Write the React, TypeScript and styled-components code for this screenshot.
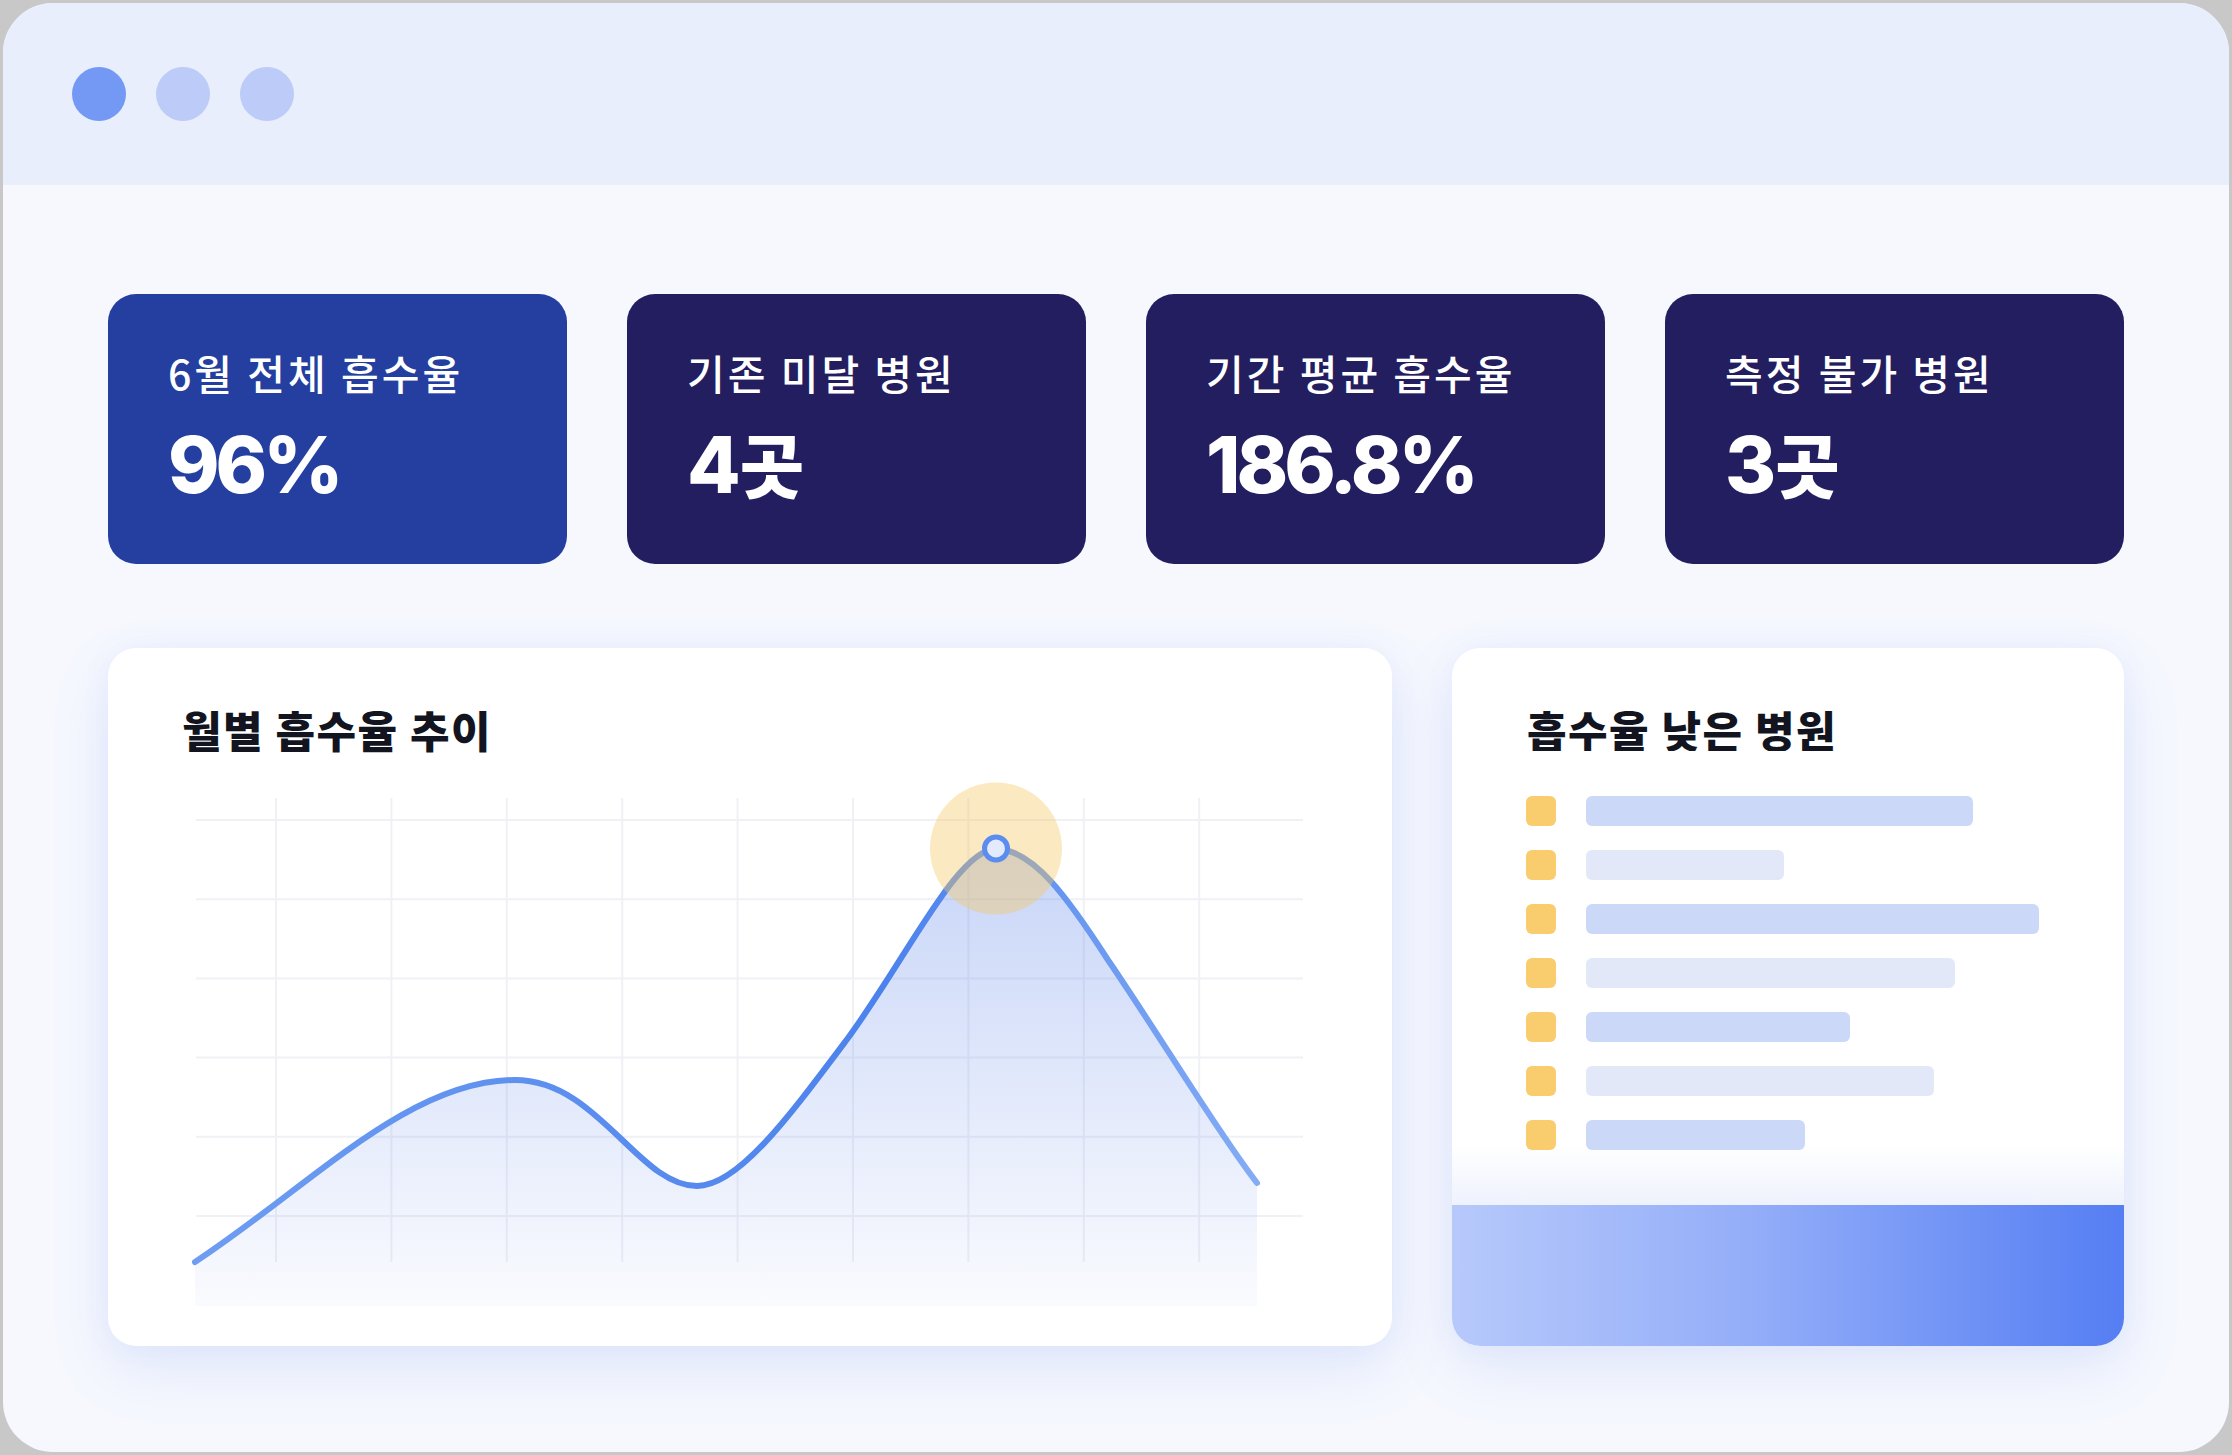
import React from "react";
import styled, { createGlobalStyle } from "styled-components";

const Global = createGlobalStyle`
  html, body { margin: 0; padding: 0; }
  body {
    background: #c8c8c8;
    width: 2232px;
    height: 1455px;
    overflow: hidden;
    font-family: "Noto Sans CJK KR", "Noto Sans", sans-serif;
  }
`;

const Window = styled.div`
  margin: 3px;
  width: 2226px;
  height: 1449px;
  border-radius: 50px;
  overflow: hidden;
  display: flex;
  flex-direction: column;
  background: #f6f8fe;
`;

const TitleBar = styled.div`
  height: 182px;
  flex: none;
  background: #e8eefb;
  display: flex;
  align-items: center;
  gap: 30px;
  padding-left: 69px;
`;

const Dot = styled.span<{ $active?: boolean }>`
  width: 54px;
  height: 54px;
  border-radius: 50%;
  background: ${(p) => (p.$active ? "#7399f4" : "#bccbf7")};
`;

const Body = styled.div`
  flex: 1;
  display: flex;
  flex-direction: column;
  gap: 84px;
  padding: 109px 105px 106px;
  min-height: 0;
`;

const Cards = styled.div`
  display: grid;
  grid-template-columns: repeat(4, 1fr);
  gap: 60px;
`;

const Card = styled.div<{ $primary?: boolean }>`
  height: 270px;
  box-sizing: border-box;
  border-radius: 28px;
  background: ${(p) => (p.$primary ? "#243f9f" : "#221e60")};
  color: #ffffff;
  padding: 58px 60px 0;
  display: flex;
  flex-direction: column;
  gap: 33px;
`;

const CardLabel = styled.div`
  font-family: "Noto Sans CJK KR", sans-serif;
  font-size: 41px;
  font-weight: 500;
  line-height: 1;
  letter-spacing: 3px;
  white-space: nowrap;
`;

const CardValue = styled.div`
  font-family: Inter, "Noto Sans CJK KR", sans-serif;
  font-size: 78px;
  font-weight: 800;
  line-height: 1;
  letter-spacing: -4px;
  white-space: nowrap;
`;

const Unit = styled.span`
  font-family: "Noto Sans CJK KR", sans-serif;
  font-size: 70px;
  font-weight: 900;
  letter-spacing: 0;
  margin-left: 3px;
`;

const Panels = styled.div`
  flex: 1;
  min-height: 0;
  display: grid;
  grid-template-columns: minmax(0, 1fr) 672px;
  gap: 60px;
`;

const Panel = styled.div`
  background: #ffffff;
  border-radius: 28px;
  box-shadow: 0 24px 60px rgba(88, 120, 230, 0.13), 0 0 30px rgba(88, 120, 230, 0.06);
  overflow: hidden;
  display: flex;
  flex-direction: column;
  padding-top: 60px;
  box-sizing: border-box;
`;

const PanelTitle = styled.h2<{ $indent: number }>`
  margin: 0 0 0 ${(p) => p.$indent}px;
  font-family: "Noto Sans CJK KR", sans-serif;
  font-size: 43px;
  font-weight: 900;
  line-height: 1;
  letter-spacing: 1.5px;
  color: #12151f;
  white-space: nowrap;
`;

const ChartSvg = styled.svg`
  display: block;
  margin-top: 27px;
  width: 1284px;
  height: 540px;
  flex: none;
`;

const ListArea = styled.div`
  flex: 1;
  display: flex;
  flex-direction: column;
  gap: 24px;
  padding: 45px 0 0 74px;
  background: linear-gradient(
    to bottom,
    #ffffff 0,
    #ffffff calc(100% - 60px),
    #eef2fc 100%
  );
`;

const Row = styled.div`
  display: flex;
  align-items: center;
  gap: 30px;
  height: 30px;
`;

const Square = styled.span`
  width: 30px;
  height: 30px;
  border-radius: 6px;
  background: #f9cd6d;
  flex: none;
`;

const Bar = styled.span<{ $w: number; $alt?: boolean }>`
  width: ${(p) => p.$w}px;
  height: 30px;
  border-radius: 6px;
  background: ${(p) => (p.$alt ? "#e2e8f7" : "#ccd8f8")};
`;

const Footer = styled.div`
  height: 141px;
  flex: none;
  background: linear-gradient(to right, #b7c9fb 0%, #93adf8 45%, #557ef3 100%);
`;

const stats = [
  { label: "6월 전체 흡수율", value: "96%", primary: true },
  { label: "기존 미달 병원", value: "4", unit: "곳" },
  { label: "기간 평균 흡수율", value: "186.8%" },
  { label: "측정 불가 병원", value: "3", unit: "곳" },
];

const bars = [387, 198, 453, 369, 264, 348, 219];

const curve =
  "M87 484 C200 410 300 302 407 302 C490 302 530 408 589 408 C630 408 680 340 740 260 C800 178 850 71 888 71 C925 71 960 120 1000 182 C1050 255 1110 355 1149 405";

function Chart() {
  const hLines = [0, 1, 2, 3, 4, 5].map((i) => 42 + i * 79.2);
  const vLines = [0, 1, 2, 3, 4, 5, 6, 7, 8].map((i) => 168 + i * 115.4);
  return (
    <ChartSvg viewBox="0 0 1284 540">
      <defs>
        <linearGradient id="areaFill" x1="0" y1="0" x2="0" y2="1">
          <stop offset="0" stopColor="rgb(70,115,230)" stopOpacity="0.3" />
          <stop offset="1" stopColor="rgb(70,115,230)" stopOpacity="0.03" />
        </linearGradient>
        <linearGradient id="lineStroke" gradientUnits="userSpaceOnUse" x1="87" y1="0" x2="1149" y2="0">
          <stop offset="0" stopColor="#6e9df1" />
          <stop offset="0.65" stopColor="#4c82ec" />
          <stop offset="1" stopColor="#84acf5" />
        </linearGradient>
      </defs>
      {hLines.map((y) => (
        <line key={"h" + y} x1="88" x2="1195" y1={y} y2={y} stroke="#eff1f5" strokeWidth="2" />
      ))}
      {vLines.map((x) => (
        <line key={"v" + x} x1={x} x2={x} y1="20" y2="484" stroke="#eff1f5" strokeWidth="2" />
      ))}
      <path d={curve + " L1149 528 L87 528 Z"} fill="url(#areaFill)" />
      <path d={curve} fill="none" stroke="url(#lineStroke)" strokeWidth="6" strokeLinecap="round" />
      <circle cx="888" cy="70.5" r="66" fill="rgba(245,200,100,0.4)" />
      <circle cx="888" cy="70.5" r="11.5" fill="#e3eafb" stroke="#5b8cf0" strokeWidth="5" />
    </ChartSvg>
  );
}

export default function App() {
  return (
    <>
      <Global />
      <Window>
        <TitleBar>
          <Dot $active />
          <Dot />
          <Dot />
        </TitleBar>
        <Body>
          <Cards>
            {stats.map((s) => (
              <Card key={s.label} $primary={s.primary}>
                <CardLabel>{s.label}</CardLabel>
                <CardValue>
                  {s.value}
                  {s.unit && <Unit>{s.unit}</Unit>}
                </CardValue>
              </Card>
            ))}
          </Cards>
          <Panels>
            <Panel>
              <PanelTitle $indent={74}>월별 흡수율 추이</PanelTitle>
              <Chart />
            </Panel>
            <Panel>
              <PanelTitle $indent={75}>흡수율 낮은 병원</PanelTitle>
              <ListArea>
                {bars.map((w, i) => (
                  <Row key={i}>
                    <Square />
                    <Bar $w={w} $alt={i % 2 === 1} />
                  </Row>
                ))}
              </ListArea>
              <Footer />
            </Panel>
          </Panels>
        </Body>
      </Window>
    </>
  );
}
